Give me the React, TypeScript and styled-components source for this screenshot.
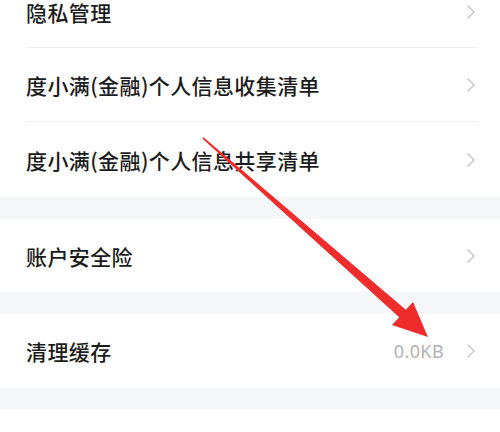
import styled, { createGlobalStyle } from "styled-components";

const GlobalStyle = createGlobalStyle`
    html, body {
        margin: 0;
        padding: 0;
        background: #ffffff;
    }
    body {
        font-family: "Noto Sans CJK SC", "Noto Sans", sans-serif;
    }
`

const Screen = styled.div`
    position: relative;
    width: 500px;
    height: 432px;
    overflow: hidden;
    background: #ffffff;
`

const Scroller = styled.div`
    margin-top: -25px;
    display: flex;
    flex-direction: column;
`

const Group = styled.section`
    background: #ffffff;
    display: flex;
    flex-direction: column;
`

const Gap = styled.div<{ $h: number }>`
    height: ${p => p.$h}px;
    background: #f5f6f8;
`

const Row = styled.div<{ $h: number; $divider: boolean }>`
    position: relative;
    height: ${p => p.$h}px;
    display: flex;
    align-items: center;
    padding: 0 24px 0 26px;

    &::after {
        content: "";
        display: ${p => (p.$divider ? "block" : "none")};
        position: absolute;
        left: 26px;
        right: 22px;
        bottom: 0;
        height: 1px;
        background: #eeeff1;
    }
`

const Label = styled.span`
    flex: 1;
    font-size: 21px;
    font-weight: 500;
    color: #1c1c1c;
    letter-spacing: 0.4px;
`

const Value = styled.span`
    font-family: "Noto Sans", "Liberation Sans", sans-serif;
    font-size: 18px;
    color: #b2b2b2;
    letter-spacing: 0.4px;
    margin-right: 22px;
`

const Arrow = styled.svg`
    position: absolute;
    left: 0;
    top: 0;
    pointer-events: none;
`

function Chevron() {
    return (
        <svg width="10" height="16" viewBox="0 0 10 16">
            <path d="M2 2 L8 8 L2 14" fill="none" stroke="#c4c4c4" strokeWidth="1.4" strokeLinecap="round" strokeLinejoin="round"/>
        </svg>
    )
}

type Item = { label: string; value?: string; h: number }

const groups: Item[][] = [
    [
        { label: "隐私管理", h: 73 },
        { label: "度小满(金融)个人信息收集清单", h: 74 },
        { label: "度小满(金融)个人信息共享清单", h: 75 },
    ],
    [{ label: "账户安全险", h: 73 }],
    [{ label: "清理缓存", value: "0.0KB", h: 74 }],
]

const gaps = [22, 22, 21]

export default function App() {
    return (
        <Screen>
            <GlobalStyle/>
            <Scroller>
                {groups.map((items, gi) => (
                    <div key={gi}>
                        <Group>
                            {items.map((it, i) => (
                                <Row key={it.label} $h={it.h} $divider={i < items.length - 1}>
                                    <Label>{it.label}</Label>
                                    {it.value && <Value>{it.value}</Value>}
                                    <Chevron/>
                                </Row>
                            ))}
                        </Group>
                        <Gap $h={gaps[gi]}/>
                    </div>
                ))}
            </Scroller>
            <Arrow width="500" height="432" viewBox="0 0 500 432">
                <polygon
                    points="203.5,137.2 405.8,309.8 413,302 428,337 392,325 399.2,317.2 202.3,138.6"
                    fill="#ee2c2c"
                />
            </Arrow>
        </Screen>
    )
}
